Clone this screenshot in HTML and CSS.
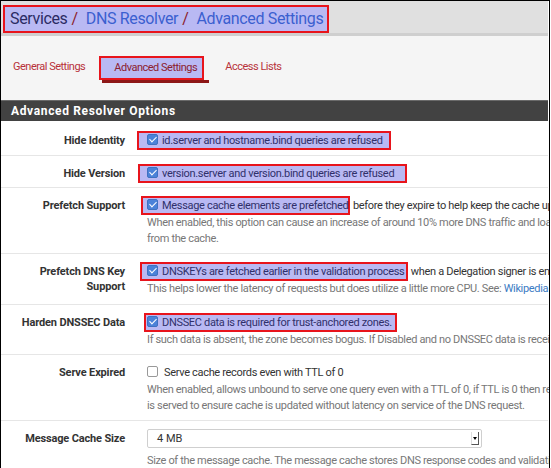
FILE: index.html
```html
<!DOCTYPE html>
<html>
<head>
<meta charset="utf-8">
<link rel="stylesheet" href="styles.css">
</head>
<body>
<div class="frame">
  <div class="crumbs">
    <h1 class="hl hl-title"><span class="c-dark">Services</span><span class="sep">/</span><span class="c-link">DNS Resolver</span><span class="sep">/</span><span class="c-link">Advanced Settings</span></h1>
  </div>
  <nav class="tabs">
    <a class="tab">General Settings</a>
    <a class="tab active"><span class="hl hl-tab">Advanced Settings</span></a>
    <a class="tab">Access Lists</a>
  </nav>
  <section class="panel">
    <div class="panel-head">Advanced Resolver Options</div>
    <div class="panel-body">
      <div class="row row-first">
        <div class="label">Hide Identity</div>
        <div class="field">
          <div class="check"><span class="hl hl-a"><span class="cb on"></span>id.server and hostname.bind queries are refused</span></div>
        </div>
      </div>
      <div class="row">
        <div class="label">Hide Version</div>
        <div class="field">
          <div class="check"><span class="hl hl-b"><span class="cb on"></span>version.server and version.bind queries are refused</span></div>
        </div>
      </div>
      <div class="row">
        <div class="label">Prefetch Support</div>
        <div class="field">
          <div class="check"><span class="hl hl-c"><span class="cb on"></span>Message cache elements are prefetched</span> before they expire to help keep the cache up to date</div>
          <p class="help">When enabled, this option can cause an increase of around 10% more DNS traffic and load on the server, but frequently requested items will not expire<br>from the cache.</p>
        </div>
      </div>
      <div class="row">
        <div class="label">Prefetch DNS Key<br>Support</div>
        <div class="field">
          <div class="check"><span class="hl hl-e"><span class="cb on"></span>DNSKEYs are fetched earlier in the validation process</span> when a Delegation signer is encountered.</div>
          <p class="help">This helps lower the latency of requests but does utilize a little more CPU. See: <a class="link">Wikipedia</a></p>
        </div>
      </div>
      <div class="row">
        <div class="label">Harden DNSSEC Data</div>
        <div class="field">
          <div class="check"><span class="hl hl-d"><span class="cb on"></span>DNSSEC data is required for trust-anchored zones.</span></div>
          <p class="help">If such data is absent, the zone becomes bogus. If Disabled and no DNSSEC data is received, then the zone is made insecure.</p>
        </div>
      </div>
      <div class="row">
        <div class="label">Serve Expired</div>
        <div class="field">
          <div class="check plain"><span class="cb"></span>Serve cache records even with TTL of 0</div>
          <p class="help">When enabled, allows unbound to serve one query even with a TTL of 0, if TTL is 0 then response<br>is served to ensure cache is updated without latency on service of the DNS request.</p>
        </div>
      </div>
      <div class="row">
        <div class="label">Message Cache Size</div>
        <div class="field">
          <div class="select"><span>4 MB</span><span class="arrow"></span></div>
          <p class="help">Size of the message cache. The message cache stores DNS response codes and validation statuses.</p>
        </div>
      </div>
    </div>
  </section>
</div>
</body>
</html>
```
FILE: styles.css
```css
* { box-sizing: border-box; }
html, body { margin: 0; padding: 0; background: #fff; }
body {
  font-family: Roboto, "Noto Sans", sans-serif;
  font-size: 11px;
  color: #333;
  overflow: hidden;
  height: 468px;
}
.frame {
  width: 550px;
  height: 480px;
  border: 1px solid #000;
  border-bottom: none;
  overflow: hidden;
  background: #fff;
}
.frame > * { margin-right: 1px; }

.hl {
  background: #b9b9f3;
  border: 2px solid #e8141c;
}

.crumbs {
  height: 35px;
  background: #e0e0e0;
  border-bottom: 3px solid #cfcfcf;
  padding: 4px 0 0 2px;
}
.crumbs h1 {
  display: inline-block;
  margin: 0;
  font-weight: 400;
  font-size: 16px;
  line-height: 24px;
  padding: 0 4px 0 5px;
  letter-spacing: -0.35px;
}
.c-dark { color: #2b2b63; }
.c-link { color: #3b5fd0; }
.sep { color: #8b1c2c; margin: 0 8px 0 4px; }

.tabs {
  background: #f5f5f5;
  height: 64px;
  display: flex;
  align-items: flex-start;
  gap: 4px;
  padding: 20px 0 0 0;
}
.tab {
  color: #b8323a;
  font-size: 11px;
  line-height: 20px;
  padding: 1px 12px;
  letter-spacing: -0.5px;
}
.tab:first-child { margin-right: 1px; }
.tab.active {
  border-bottom: 3px solid #8d1717;
  padding: 0;
  width: 107px;
}
.hl-tab {
  display: block;
  width: 105px;
  color: #8c2030;
  padding: 0 0 0 13px;
  margin-left: -3px;
}

.panel-head {
  background: #424242;
  border-top: 1px solid #6a6a6a;
  color: #fff;
  font-weight: 700;
  font-size: 12px;
  letter-spacing: 0.65px;
  height: 21px;
  line-height: 20px;
  padding-left: 10px;
}

.row {
  display: grid;
  grid-template-columns: 124px 1fr;
  column-gap: 22px;
  padding: 8px 0 4px;
  border-bottom: 1px solid #e6e6e6;
}
.row-first { padding-top: 10px; padding-bottom: 5px; }
.label {
  text-align: right;
  font-weight: 700;
  color: #333;
  line-height: 15px;
  padding-top: 2px;
  letter-spacing: -0.15px;
}
.field { min-width: 0; white-space: nowrap; }
.check {
  line-height: 15px;
  color: #333;
  letter-spacing: -0.32px;
}
.check .hl {
  display: inline-block;
  color: #30306a;
}
.plain { padding: 2px 0; }
.hl-a { margin-left: -10px; padding: 0 6px 0 8px; }
.hl-b { margin-left: -9px; padding: 0 11px 0 7px; }
.hl-c { margin-left: -6px; padding: 0 0 0 4px; }
.hl-e { margin-left: -7px; padding: 0 2px 0 5px; }
.hl-d { margin-left: -3px; padding: 0 3px 0 1px; }
.cb {
  display: inline-block;
  width: 11px;
  height: 11px;
  border: 1px solid #999;
  border-radius: 2px;
  background: #fff;
  vertical-align: -1px;
  margin-right: 4px;
  position: relative;
}
.cb.on {
  background: #4b82d9;
  border-color: #3f71c0;
}
.cb.on::after {
  content: "";
  position: absolute;
  left: 3px;
  top: 0px;
  width: 3px;
  height: 6px;
  border: solid #fff;
  border-width: 0 1.5px 1.5px 0;
  transform: rotate(45deg);
}
.plain .cb { margin-right: 6px; }
.help {
  margin: 0 0 3px;
  color: #777;
  line-height: 15.5px;
  letter-spacing: -0.34px;
}
.link { color: #3b7bc4; }

.select {
  width: 335px;
  height: 19px;
  border: 1px solid #cfcfcf;
  border-radius: 2px;
  display: flex;
  align-items: center;
  justify-content: space-between;
  padding-left: 9px;
  color: #333;
  margin-bottom: 5px;
}
.select .arrow {
  width: 8px;
  height: 13px;
  margin-right: 2px;
  border-left: 1px solid #ddd;
  border-right: 1px solid #555;
  border-bottom: 1px solid #555;
  position: relative;
}
.select .arrow::after {
  content: "";
  position: absolute;
  left: 1px;
  top: 5px;
  border-left: 2px solid transparent;
  border-right: 2px solid transparent;
  border-top: 3px solid #000;
}
```
